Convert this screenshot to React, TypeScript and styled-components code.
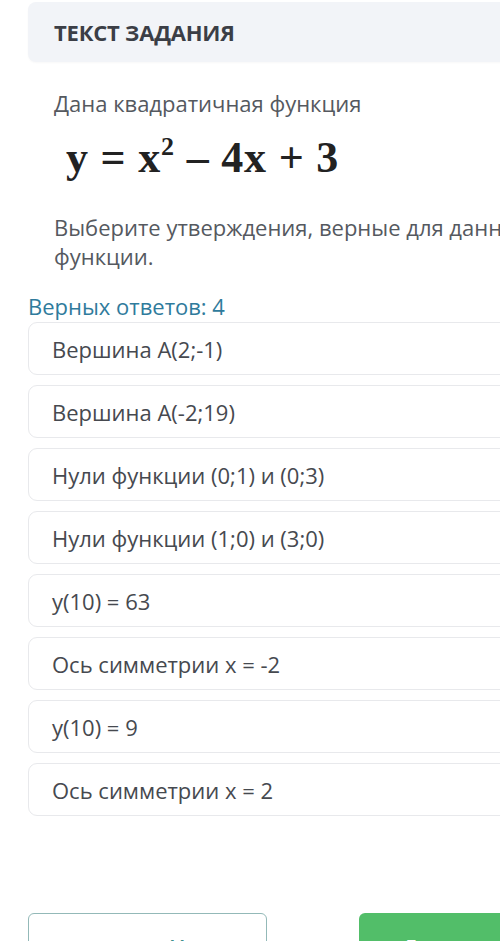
import React from "react";
import styled, { createGlobalStyle } from "styled-components";

const GlobalStyle = createGlobalStyle`
  html, body {
    margin: 0;
    padding: 0;
    background: #ffffff;
    overflow: hidden;
  }
  body {
    font-family: "Open Sans", "Noto Sans", sans-serif;
  }
`;

const Page = styled.div`
  width: 600px;
  padding: 2px 0 0 28px;
  box-sizing: border-box;
  display: flex;
  flex-direction: column;
`;

const TaskHeader = styled.div`
  height: 60px;
  background: #f2f4f8;
  border-radius: 8px;
  display: flex;
  align-items: center;
  padding-left: 26px;
  box-shadow: 0 1px 2px rgba(0, 0, 0, 0.03);
`;

const HeaderTitle = styled.h2`
  margin: 0;
  font-size: 22px;
  font-weight: 700;
  color: #3b3e46;
  letter-spacing: -0.2px;
`;

const TaskBody = styled.div`
  padding: 27px 0 0 26px;
  display: flex;
  flex-direction: column;
`;

const Paragraph = styled.p<{ $max?: number }>`
  margin: 0;
  font-size: 22px;
  line-height: 29px;
  color: #55595f;
  max-width: ${(p) => (p.$max ? `${p.$max}px` : "none")};
`;

const Formula = styled.div`
  margin: 17px 0 32px 12px;
  font-family: "Liberation Serif", "Times New Roman", serif;
  font-weight: 700;
  font-size: 44px;
  line-height: 46px;
  letter-spacing: 0.8px;
  color: #222;
  sup {
    font-size: 26px;
    line-height: 0;
    vertical-align: 17px;
  }
`;

const CountLabel = styled.div`
  margin-top: 22px;
  font-size: 22px;
  line-height: 26px;
  color: #2f7b9c;
`;

const OptionList = styled.div`
  display: flex;
  flex-direction: column;
  gap: 10px;
  margin-top: 3px;
`;

const OptionCard = styled.div`
  height: 53px;
  box-sizing: border-box;
  border: 1.5px solid #e8e9ec;
  border-radius: 9px;
  background: #ffffff;
  display: flex;
  align-items: center;
  padding-left: 23px;
  font-size: 22px;
  color: #46494f;
`;

const ButtonRow = styled.div`
  margin-top: 97px;
  display: flex;
  gap: 92px;
`;

const BackButton = styled.button`
  width: 239px;
  height: 68px;
  box-sizing: border-box;
  border: 1.5px solid #93b9b8;
  border-radius: 6px;
  background: #fff;
  color: #3f8f8c;
  font-family: "Open Sans", sans-serif;
  font-size: 22px;
  font-weight: 600;
  display: flex;
  align-items: center;
  gap: 66px;
  padding: 0 0 0 52px;
`;

const NextButton = styled.button`
  width: 239px;
  height: 68px;
  border: none;
  border-radius: 6px;
  background: #52be69;
  color: #fff;
  font-family: "Open Sans", sans-serif;
  font-size: 22px;
  font-weight: 600;
  display: flex;
  align-items: center;
  padding-left: 43px;
`;

const options = [
  "Вершина A(2;-1)",
  "Вершина A(-2;19)",
  "Нули функции (0;1) и (0;3)",
  "Нули функции (1;0) и (3;0)",
  "y(10) = 63",
  "Ось симметрии x = -2",
  "y(10) = 9",
  "Ось симметрии x = 2",
];

export default function App() {
  return (
    <>
      <GlobalStyle />
      <Page>
        <TaskHeader>
          <HeaderTitle>ТЕКСТ ЗАДАНИЯ</HeaderTitle>
        </TaskHeader>
        <TaskBody>
          <Paragraph>Дана квадратичная функция</Paragraph>
          <Formula>
            y = x<sup>2</sup> – 4x + 3
          </Formula>
          <Paragraph $max={520}>
            Выберите утверждения, верные для данной функции.
          </Paragraph>
        </TaskBody>
        <CountLabel>Верных ответов: 4</CountLabel>
        <OptionList>
          {options.map((o) => (
            <OptionCard key={o}>{o}</OptionCard>
          ))}
        </OptionList>
        <ButtonRow>
          <BackButton>
            <span>←</span>
            <span>Назад</span>
          </BackButton>
          <NextButton>Далее</NextButton>
        </ButtonRow>
      </Page>
    </>
  );
}
